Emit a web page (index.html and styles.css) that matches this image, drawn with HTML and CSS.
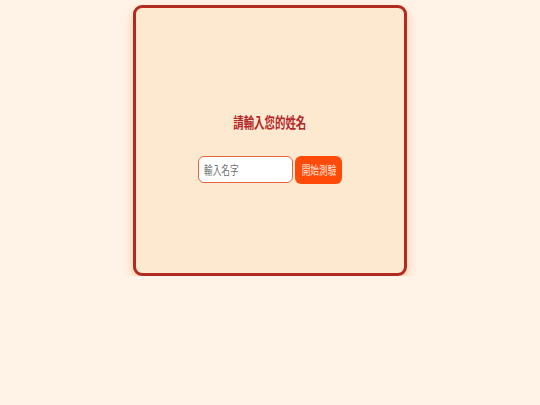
FILE: index.html
```html
<!DOCTYPE html>
<html lang="zh-Hant">
<head>
<meta charset="utf-8">
<link rel="stylesheet" href="styles.css">
</head>
<body>
<div class="card">
  <h2 class="title"><span class="squeeze">請輸入您的姓名</span></h2>
  <div class="row">
    <div class="field"><span class="ph squeeze">輸入名字</span></div>
    <button class="btn"><span class="squeeze">開始測驗</span></button>
  </div>
</div>
</body>
</html>
```
FILE: styles.css
```css
html, body {
  margin: 0;
  padding: 0;
  background: #fff2e6;
  font-family: "Noto Sans CJK TC", "Noto Sans", sans-serif;
}
body {
  padding-top: 5px;
}
.card {
  box-sizing: border-box;
  width: 274px;
  height: 271px;
  margin: 0 auto;
  background: #fde9cf;
  border: 3px solid #b22a22;
  border-radius: 9px;
  box-shadow: 0 5px 10px rgba(255, 140, 50, 0.4);
  display: flex;
  flex-direction: column;
  align-items: center;
  justify-content: center;
  padding-top: 14px;
}
.squeeze {
  display: inline-block;
  transform: scaleX(0.72);
  transform-origin: center;
  white-space: nowrap;
}
.title {
  margin: 0 0 24px 0;
  font-size: 14.5px;
  line-height: 20px;
  font-weight: 700;
  color: #b3262a;
}
.row {
  display: flex;
  align-items: center;
  gap: 2px;
}
.field {
  box-sizing: border-box;
  width: 95px;
  height: 27px;
  background: #ffffff;
  border: 1.5px solid #e2683c;
  border-radius: 6px;
  display: flex;
  align-items: center;
}
.ph {
  font-size: 12px;
  color: #6f6f6f;
  transform-origin: left center;
  margin-left: 5px;
}
.btn {
  box-sizing: border-box;
  width: 47px;
  height: 28px;
  border: none;
  border-radius: 6px;
  background: #ff4a0a;
  color: #ffe3d6;
  font-family: inherit;
  font-size: 12px;
  padding: 0;
  display: flex;
  align-items: center;
  justify-content: center;
}
```
